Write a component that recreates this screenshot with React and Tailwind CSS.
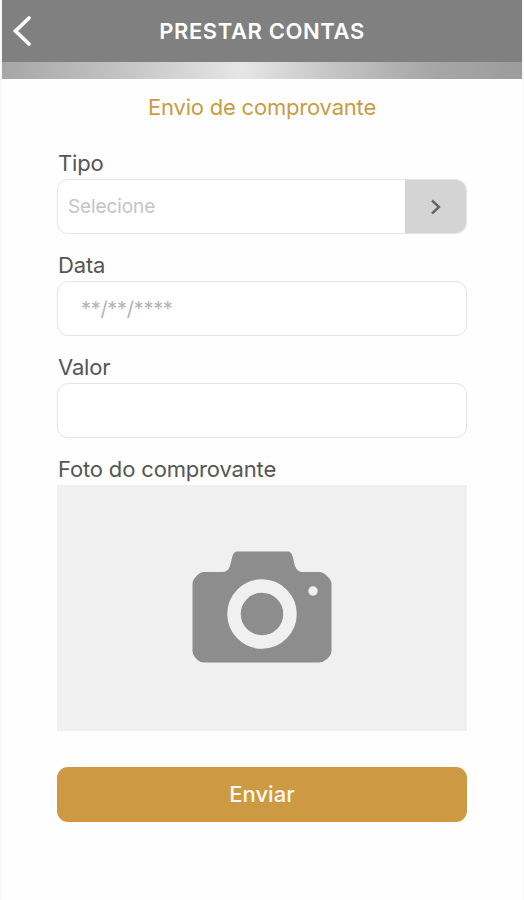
function Label({ children }) {
  return (
    <label className="flex h-8 items-center whitespace-nowrap pl-px text-[22px] tracking-[-0.16px] text-[#555555]">
      <span>{children}</span>
    </label>
  )
}

function Field({ label, children }) {
  return (
    <div className="mb-3.5">
      <Label>{label}</Label>
      <div className="flex h-[55px] items-center overflow-hidden rounded-[11px] border-[1.5px] border-[#e4e4e4] bg-white">
        {children}
      </div>
    </div>
  )
}

function CameraIcon() {
  return (
    <svg width="140" height="112" viewBox="0 0 140 112" fill="none">
      <path
        d="M12 21H30Q36 21 38 15L40.500 5Q42 0.500 45 0.500H96Q99 0.500 100.500 5L103 15Q105 21 111 21H127Q131 21 135 25Q139.500 29 139.500 33V100Q139.500 104 135 108Q131 111.500 127 111.500H12Q8 111.500 4.500 108Q0.500 104 0.500 100V33Q0.500 29 4.500 25Q8 21 12 21Z"
        fill="#8d8d8d"
      />
      <circle cx="70" cy="63" r="28" stroke="#f0f0f0" strokeWidth="13.500" />
      <circle cx="121" cy="40" r="4.700" fill="#f0f0f0" />
    </svg>
  )
}

export default function App() {
  return (
    <div className="h-[900px] w-[524px] overflow-hidden border-x-2 border-[#f9f9f9] bg-[#fefefe] font-['Inter',sans-serif]">
      <header className="grid h-[62px] grid-cols-[1fr_auto_1fr] items-center bg-[#808080]">
        <button className="ml-2.5 w-5" aria-label="Voltar">
          <svg width="20" height="32" viewBox="0 0 20 32" fill="none">
            <path d="M17 3L3.500 16L17 29" stroke="white" strokeWidth="3.700" strokeLinecap="round" strokeLinejoin="miter" />
          </svg>
        </button>
        <h1 className="text-[22px] font-semibold tracking-[0.6px] text-white">PRESTAR CONTAS</h1>
      </header>
      <div className="h-[17px] bg-[linear-gradient(90deg,#a6a6a6_0%,#c2c2c2_22%,#e6e6e6_46%,#c4c4c4_64%,#a7a7a7_82%,#9c9c9c_100%)]" />

      <main className="mx-[55px] pt-3">
        <h2 className="text-center text-[22px] leading-8 tracking-[-0.2px] text-[#c99b43]">Envio de comprovante</h2>
        <form className="pt-6">
          <div className="flex flex-col gap-px">
            <Field label="Tipo">
              <span className="flex-1 pl-2.5 pt-0.5 text-[19px] tracking-[-0.1px] text-[#c4c4c4]">Selecione</span>
              <button type="button" className="-mr-px flex h-14 w-[62px] items-center justify-center bg-[#d4d4d4]" aria-label="Selecionar tipo">
                <svg width="12" height="16" viewBox="0 0 12 16" fill="none">
                  <path d="M2 1.500L9 8L2 14.500" stroke="#666666" strokeWidth="2.400" />
                </svg>
              </button>
            </Field>
            <Field label="Data">
              <span className="pl-[23px] text-[20px] tracking-[-0.3px] text-[#b4b4b4]">**/**/****</span>
            </Field>
            <Field label="Valor" />
          </div>
          <div className="pt-px">
            <Label>Foto do comprovante</Label>
          </div>
          <div className="flex h-[246px] items-center justify-center bg-[#f0f0f0] pb-0.5">
            <CameraIcon />
          </div>
          <button type="button" className="mt-9 h-[55px] w-full rounded-[11px] bg-[#cd9943] text-[22px] font-medium text-[#fffaf0]">
            Enviar
          </button>
        </form>
      </main>
    </div>
  )
}
